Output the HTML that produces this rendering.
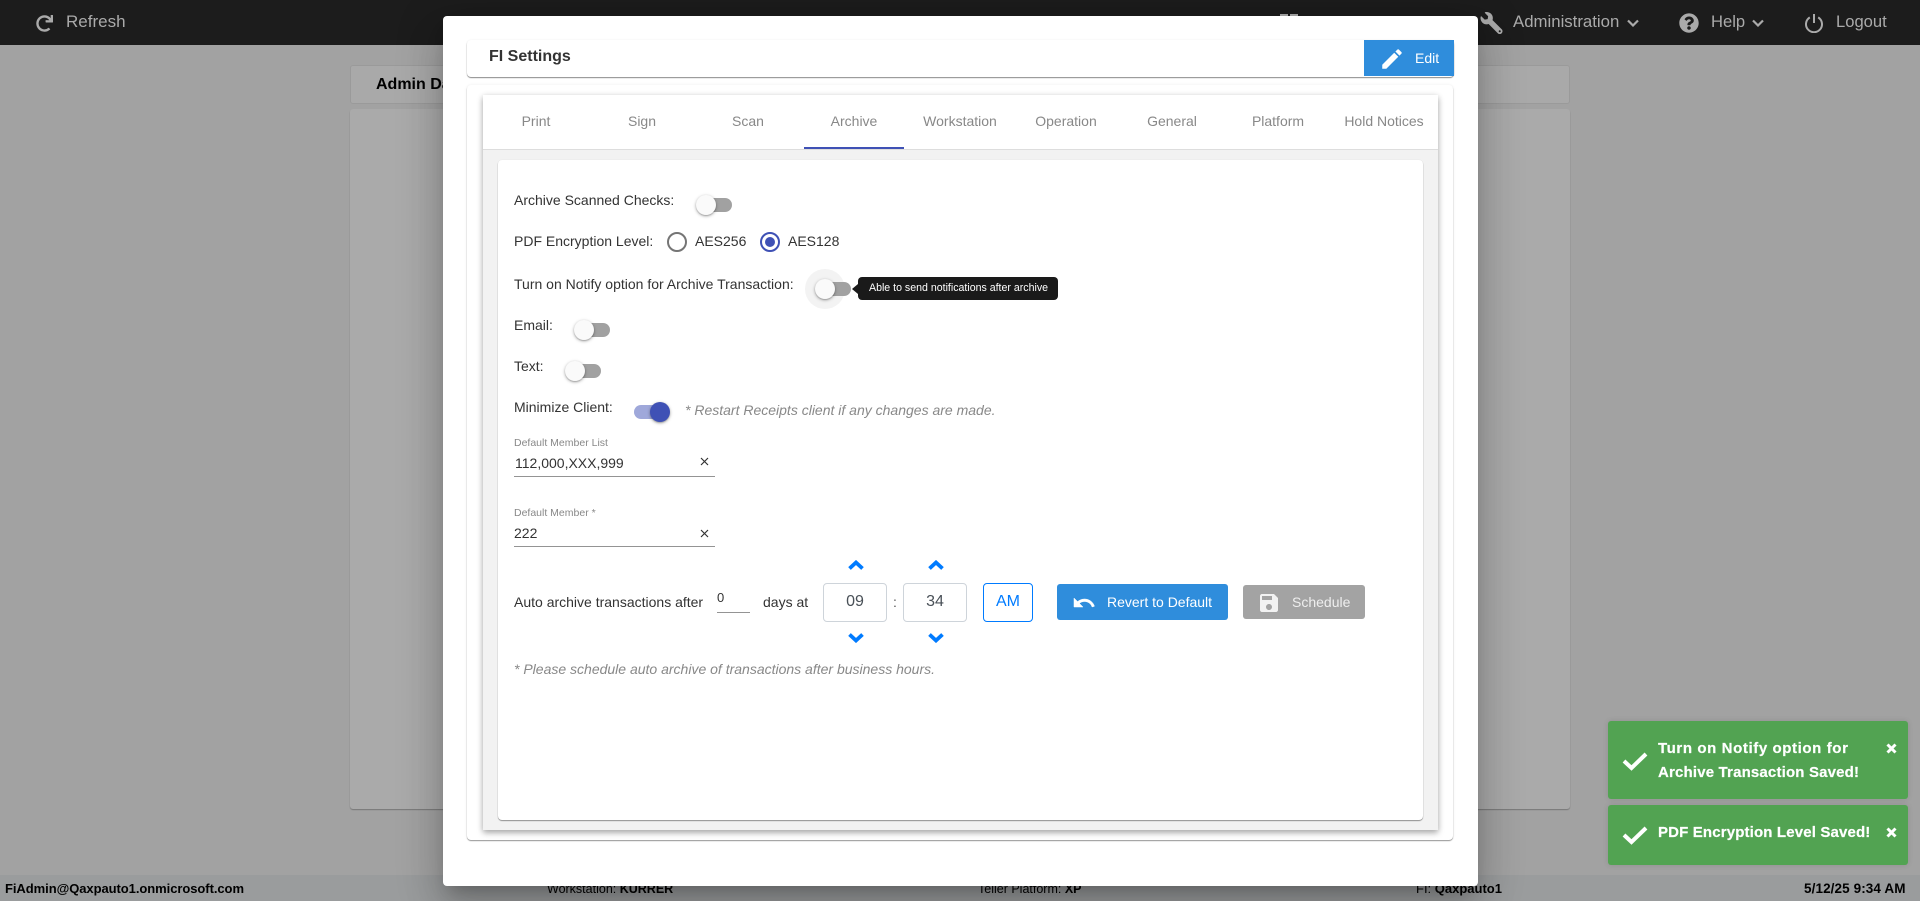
<!DOCTYPE html>
<html lang="en"><head><meta charset="utf-8"><title>FI Settings</title>
<style>
html,body{margin:0;padding:0;width:1920px;height:901px;overflow:hidden;background:#a2a2a2;font-family:"Liberation Sans",Arial,sans-serif}
.a{position:absolute}
.t{position:absolute;white-space:nowrap;line-height:20px;font-size:14px;color:#333}
svg{position:absolute;display:block}
.tab{position:absolute;top:111px;width:106px;text-align:center;line-height:20px;font-size:14px;color:#888}
.track{position:absolute;width:34px;height:14px;border-radius:7px;background:#a1a1a1}
.thumb{position:absolute;width:20px;height:20px;border-radius:50%;background:#fafafa;box-shadow:0 1px 3px rgba(0,0,0,.35),0 1px 1px rgba(0,0,0,.14)}
.nav{color:#aaa;font-size:17px}
.foot{font-size:12.500px;color:#000;top:879px}
.toast{position:absolute;left:1608px;width:300px;background:#52a352;border-radius:3px;box-shadow:0 0 6px rgba(0,0,0,.12)}
.tt{color:#fff;font-weight:bold;font-size:15px;-webkit-text-stroke:.2px #fff}
</style></head>
<body>
<!-- nav -->
<div class="a" style="left:0;top:0;width:1920px;height:45px;background:#1c1c1c"></div>
<svg style="left:36px;top:15px" width="17" height="17" viewBox="0 0 512 512"><path fill="#aaa" d="M500.33 0h-47.41a12 12 0 0 0-12 12.57l4 82.76A247.42 247.42 0 0 0 256 8C119.34 8 8.05 119.53 8 256.19 7.95 393.07 119.1 504 256 504a247.1 247.1 0 0 0 166.18-63.91 12 12 0 0 0 .48-17.43l-34-34a12 12 0 0 0-16.38-.55A176 176 0 1 1 402.1 157.8l-101.53-4.87a12 12 0 0 0-12.57 12v47.41a12 12 0 0 0 12 12h200.33a12 12 0 0 0 12-12V12a12 12 0 0 0-12-12z"/></svg>
<div class="t nav" style="left:66px;top:12px">Refresh</div>
<div class="a" style="left:1280px;top:14px;width:8px;height:3px;background:#aaa"></div>
<div class="a" style="left:1290px;top:14px;width:8px;height:3px;background:#aaa"></div>
<svg style="left:1480px;top:12px" width="23" height="22" viewBox="0 0 512 512"><path transform="translate(512 0) scale(-1 1)" fill="#aaa" d="M507.73 109.1c-2.24-9.03-13.54-12.09-20.12-5.51l-74.36 74.36-67.88-11.31-11.31-67.88 74.36-74.36c6.62-6.62 3.43-17.9-5.66-20.16-47.38-11.74-99.55.91-136.58 37.93-39.64 39.64-50.55 97.1-34.05 147.2L18.74 402.76c-24.99 24.99-24.99 65.51 0 90.5 24.99 24.99 65.51 24.99 90.5 0l213.21-213.21c50.12 16.71 107.47 5.68 147.37-34.22 37.07-37.07 49.7-89.32 37.91-136.73zM64 472c-13.25 0-24-10.75-24-24 0-13.26 10.75-24 24-24s24 10.74 24 24c0 13.25-10.75 24-24 24z"/></svg>
<div class="t nav" style="left:1513px;top:12px;font-size:16.800px">Administration</div>
<svg style="left:1627px;top:19px" width="12" height="8" viewBox="0 0 12 8"><polyline points="1,1.500 6,6.500 11,1.500" fill="none" stroke="#aaa" stroke-width="2.200"/></svg>
<svg style="left:1679px;top:13px" width="20" height="20" viewBox="0 0 512 512"><path fill="#aaa" d="M504 256c0 136.997-111.043 248-248 248S8 392.997 8 256C8 119.083 119.043 8 256 8s248 111.083 248 248zM262.655 90c-54.497 0-89.255 22.957-116.549 63.758-3.536 5.286-2.353 12.415 2.715 16.258l34.699 26.31c5.205 3.947 12.621 3.008 16.665-2.122 17.864-22.658 30.113-35.797 57.303-35.797 20.429 0 45.698 13.148 45.698 32.958 0 14.976-12.363 22.667-32.534 33.976C247.128 238.528 216 254.941 216 296v4c0 6.627 5.373 12 12 12h56c6.627 0 12-5.373 12-12v-1.333c0-28.462 83.186-29.647 83.186-106.667 0-58.002-60.165-102-116.531-102zM256 338c-25.365 0-46 20.635-46 46 0 25.364 20.635 46 46 46s46-20.636 46-46c0-25.365-20.635-46-46-46z"/></svg>
<div class="t nav" style="left:1711px;top:12px;font-size:16.600px">Help</div>
<svg style="left:1752px;top:19px" width="12" height="8" viewBox="0 0 12 8"><polyline points="1,1.500 6,6.500 11,1.500" fill="none" stroke="#aaa" stroke-width="2.200"/></svg>
<svg style="left:1804px;top:13px" width="20" height="20" viewBox="0 0 20 20"><path d="M5.800 4.400a8 8 0 1 0 8.400 0" fill="none" stroke="#aaa" stroke-width="2"/><line x1="10" y1="1" x2="10" y2="10" stroke="#aaa" stroke-width="2"/></svg>
<div class="t nav" style="left:1836px;top:12px;font-size:16.600px">Logout</div>

<!-- background panels -->
<div class="a" style="left:350px;top:65px;width:1218px;height:37px;background:#a9a9a9;border:1px solid #9a9a9a;border-radius:3px"></div>
<div class="t" style="left:376px;top:75px;font-size:16px;font-weight:bold;color:#000">Admin Dashboard</div>
<div class="a" style="left:350px;top:109px;width:1220px;height:700px;background:#aaa;border-radius:3px;box-shadow:0 1px 1px #777"></div>

<!-- footer -->
<div class="a" style="left:0;top:875px;width:1920px;height:26px;background:#9a9c9d"></div>
<div class="t foot" style="left:5px;font-weight:bold;font-size:13px;letter-spacing:-.06px">FiAdmin@Qaxpauto1.onmicrosoft.com</div>
<div class="t foot" style="left:547px">Workstation: <b>KURRER</b></div>
<div class="t foot" style="left:978px">Teller Platform: <b>XP</b></div>
<div class="t foot" style="left:1416px;font-size:13px">FI: <b>Qaxpauto1</b></div>
<div class="t foot" style="left:1804px;font-weight:bold;font-size:13.500px;letter-spacing:.1px">5/12/25 9:34 AM</div>

<!-- toasts -->
<div class="toast" style="top:721px;height:78px"></div>
<div class="toast" style="top:805px;height:60px"></div>
<svg style="left:1622px;top:751px" width="26" height="20" viewBox="0 0 26 20"><polyline points="2,10 9.500,17 24,3" fill="none" stroke="#fff" stroke-width="4"/></svg>
<svg style="left:1622px;top:825px" width="26" height="20" viewBox="0 0 26 20"><polyline points="2,10 9.500,17 24,3" fill="none" stroke="#fff" stroke-width="4"/></svg>
<div class="t tt" style="left:1658px;top:739px;letter-spacing:.6px">Turn on Notify option for</div>
<div class="t tt" style="left:1658px;top:763px;letter-spacing:.17px">Archive Transaction Saved!</div>
<div class="t tt" style="left:1658px;top:823px;letter-spacing:.15px">PDF Encryption Level Saved!</div>
<svg style="left:1886px;top:743px" width="11" height="11" viewBox="0 0 11 11"><path d="M1.500 1.500L9.500 9.500M9.500 1.500L1.500 9.500" stroke="#fff" stroke-width="3"/></svg>
<svg style="left:1886px;top:827px" width="11" height="11" viewBox="0 0 11 11"><path d="M1.500 1.500L9.500 9.500M9.500 1.500L1.500 9.500" stroke="#fff" stroke-width="3"/></svg>

<!-- modal -->
<div class="a" style="left:443px;top:16px;width:1035px;height:870px;background:#fff;border-radius:4px;box-shadow:0 11px 15px -7px rgba(0,0,0,.2),0 24px 38px 3px rgba(0,0,0,.14),0 9px 46px 8px rgba(0,0,0,.12)"></div>
<div class="a" style="left:467px;top:40px;width:987px;height:37px;background:#fff;border-radius:4px;box-shadow:0 1px 1px rgba(0,0,0,.45),0 0 2px rgba(0,0,0,.06)"></div>
<div class="t" style="left:489px;top:47px;font-size:16px;font-weight:bold;color:#333">FI Settings</div>
<div class="a" style="left:1364px;top:40px;width:90px;height:36px;background:#2f8ddc"></div>
<svg style="left:1379px;top:46px" width="26" height="26" viewBox="0 0 24 24"><path fill="#fff" d="M3 17.250V21h3.750L17.810 9.940l-3.750-3.750L3 17.250zM20.710 7.040c.39-.39.39-1.020 0-1.410l-2.340-2.340c-.39-.39-1.020-.39-1.410 0l-1.830 1.830 3.750 3.750 1.830-1.830z"/></svg>
<div class="t" style="left:1415px;top:48px;color:#fff">Edit</div>

<div class="a" style="left:467px;top:85px;width:986px;height:755px;background:#fff;border-radius:4px;box-shadow:0 1px 1px rgba(0,0,0,.4),0 0 3px rgba(0,0,0,.07)"></div>
<div class="a" style="left:483px;top:95px;width:955px;height:735px;background:#f2f2f2;box-shadow:0 3px 6px rgba(0,0,0,.28),0 1px 6px rgba(0,0,0,.12)"></div>
<div class="a" style="left:483px;top:95px;width:955px;height:54px;background:#fff;border-bottom:1px solid #ddd"></div>
<div class="tab" style="left:483px">Print</div>
<div class="tab" style="left:589px">Sign</div>
<div class="tab" style="left:695px">Scan</div>
<div class="tab" style="left:801px">Archive</div>
<div class="tab" style="left:907px">Workstation</div>
<div class="tab" style="left:1013px">Operation</div>
<div class="tab" style="left:1119px">General</div>
<div class="tab" style="left:1225px">Platform</div>
<div class="tab" style="left:1331px">Hold Notices</div>
<div class="a" style="left:804px;top:147px;width:100px;height:2px;background:#3f51b5"></div>

<div class="a" style="left:498px;top:160px;width:925px;height:660px;background:#fff;border-radius:4px;box-shadow:0 1px 1px rgba(0,0,0,.4),0 0 1px rgba(0,0,0,.1)"></div>

<!-- rows -->
<div class="t" style="left:514px;top:190px">Archive Scanned Checks:</div>
<div class="track" style="left:698px;top:198px"></div><div class="thumb" style="left:696px;top:195px"></div>

<div class="t" style="left:514px;top:231px">PDF Encryption Level:</div>
<div class="a" style="left:667px;top:232px;width:16px;height:16px;border:2px solid #757575;border-radius:50%"></div>
<div class="t" style="left:695px;top:231px">AES256</div>
<div class="a" style="left:760px;top:232px;width:16px;height:16px;border:2px solid #3f51b5;border-radius:50%"></div>
<div class="a" style="left:765px;top:237px;width:10px;height:10px;background:#3f51b5;border-radius:50%"></div>
<div class="t" style="left:788px;top:231px">AES128</div>

<div class="t" style="left:514px;top:274px">Turn on Notify option for Archive Transaction:</div>
<div class="a" style="left:805px;top:269px;width:40px;height:40px;background:#f3f3f3;border-radius:50%"></div>
<div class="track" style="left:817px;top:282px"></div><div class="thumb" style="left:815px;top:279px"></div>
<div class="a" style="left:852px;top:284px;width:0;height:0;border-top:5px solid transparent;border-bottom:5px solid transparent;border-right:6px solid #1a1a1a"></div>
<div class="a" style="left:858px;top:277px;width:200px;height:23px;background:#1a1a1a;border-radius:4px"></div>
<div class="t" style="left:869px;top:278px;color:#fff;font-size:10.600px">Able to send notifications after archive</div>

<div class="t" style="left:514px;top:315px">Email:</div>
<div class="track" style="left:576px;top:323px"></div><div class="thumb" style="left:574px;top:320px"></div>

<div class="t" style="left:514px;top:356px">Text:</div>
<div class="track" style="left:567px;top:364px"></div><div class="thumb" style="left:565px;top:361px"></div>

<div class="t" style="left:514px;top:397px">Minimize Client:</div>
<div class="track" style="left:634px;top:405px;background:#9fa8da"></div><div class="thumb" style="left:650px;top:402px;background:#3f51b5"></div>
<div class="t" style="left:685px;top:400px;color:#888;font-style:italic">* Restart Receipts client if any changes are made.</div>

<div class="t" style="left:514px;top:433px;font-size:10.500px;color:#888">Default Member List</div>
<div class="t" style="left:515px;top:453px;font-size:14px">112,000,XXX,999</div>
<svg style="left:700px;top:457px" width="9" height="9" viewBox="0 0 9 9"><path d="M1 1L8 8M8 1L1 8" stroke="#333" stroke-width="1.200"/></svg>
<div class="a" style="left:514px;top:476px;width:201px;height:1px;background:#949494"></div>

<div class="t" style="left:514px;top:503px;font-size:10.500px;color:#888">Default Member *</div>
<div class="t" style="left:514px;top:523px;font-size:14px">222</div>
<svg style="left:700px;top:529px" width="9" height="9" viewBox="0 0 9 9"><path d="M1 1L8 8M8 1L1 8" stroke="#333" stroke-width="1.200"/></svg>
<div class="a" style="left:514px;top:546px;width:201px;height:1px;background:#949494"></div>

<div class="t" style="left:514px;top:592px">Auto archive transactions after</div>
<div class="t" style="left:717px;top:588px;font-size:13px">0</div>
<div class="a" style="left:717px;top:612px;width:33px;height:1px;background:#949494"></div>
<div class="t" style="left:763px;top:592px">days at</div>

<svg style="left:848px;top:560px" width="16" height="11" viewBox="0 0 16 11"><polyline points="1.500,8.500 8,2.500 14.500,8.500" fill="none" stroke="#007bff" stroke-width="3.800"/></svg>
<svg style="left:928px;top:560px" width="16" height="11" viewBox="0 0 16 11"><polyline points="1.500,8.500 8,2.500 14.500,8.500" fill="none" stroke="#007bff" stroke-width="3.800"/></svg>
<svg style="left:848px;top:632px" width="16" height="11" viewBox="0 0 16 11"><polyline points="1.500,2.500 8,8.500 14.500,2.500" fill="none" stroke="#007bff" stroke-width="3.800"/></svg>
<svg style="left:928px;top:632px" width="16" height="11" viewBox="0 0 16 11"><polyline points="1.500,2.500 8,8.500 14.500,2.500" fill="none" stroke="#007bff" stroke-width="3.800"/></svg>

<div class="a" style="left:823px;top:583px;width:62px;height:37px;border:1px solid #ced4da;border-radius:4px;box-sizing:content-box"></div>
<div class="t" style="left:823px;top:592px;width:64px;text-align:center;font-size:16px;color:#495057">09</div>
<div class="t" style="left:893px;top:592px;color:#555">:</div>
<div class="a" style="left:903px;top:583px;width:62px;height:37px;border:1px solid #ced4da;border-radius:4px"></div>
<div class="t" style="left:903px;top:592px;width:64px;text-align:center;font-size:16px;color:#495057">34</div>
<div class="a" style="left:983px;top:583px;width:48px;height:37px;border:1px solid #007bff;border-radius:4px"></div>
<div class="t" style="left:983px;top:592px;width:50px;text-align:center;font-size:16px;color:#007bff">AM</div>

<div class="a" style="left:1057px;top:584px;width:171px;height:36px;background:#2f8ddc;border-radius:3px"></div>
<svg style="left:1072px;top:591px" width="24" height="24" viewBox="0 0 24 24"><path fill="#fff" stroke="#fff" stroke-width=".5" d="M12.500 8c-2.650 0-5.050.99-6.900 2.600L2 7v9h9l-3.620-3.620c1.390-1.160 3.160-1.880 5.120-1.880 3.540 0 6.550 2.310 7.600 5.500l2.370-.78C21.080 11.030 17.150 8 12.500 8z"/></svg>
<div class="t" style="left:1107px;top:592px;color:#fff">Revert to Default</div>
<div class="a" style="left:1243px;top:585px;width:122px;height:34px;background:#a3a3a3;border-radius:3px"></div>
<svg style="left:1257px;top:591px" width="24" height="24" viewBox="0 0 24 24"><path fill="#f2f2f2" d="M17 3H5c-1.110 0-2 .9-2 2v14c0 1.100.89 2 2 2h14c1.100 0 2-.9 2-2V7l-4-4zm-5 16c-1.660 0-3-1.340-3-3s1.340-3 3-3 3 1.340 3 3-1.340 3-3 3zm3-10H5V5h10v4z"/></svg>
<div class="t" style="left:1292px;top:592px;color:#eee">Schedule</div>

<div class="t" style="left:514px;top:659px;color:#888;font-style:italic">* Please schedule auto archive of transactions after business hours.</div>
</body></html>
